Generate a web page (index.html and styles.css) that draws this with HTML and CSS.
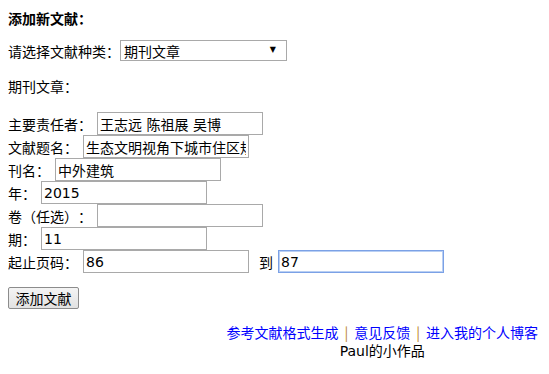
FILE: index.html
```html
<!DOCTYPE html>
<html lang="zh-CN">
<head>
    <meta charset="UTF-8">
    <title>参考文献格式生成</title>
    <link rel="stylesheet" href="styles.css">
</head>
<body>

<div class="title">添加新文献：</div>

<div class="select-row">
    <label for="docType">请选择文献种类：</label>
    <div class="select-wrap">
        <select id="docType" class="doc-select">
            <option>期刊文章</option>
            <option>专著</option>
            <option>学位论文</option>
        </select>
        <span class="select-arrow">&#9660;</span>
    </div>
</div>

<div class="subtitle">期刊文章：</div>

<div class="fields">
    <div class="field"><label>主要责任者：</label><input type="text" value="王志远 陈祖展 吴博"></div>
    <div class="field"><label>文献题名：</label><input type="text" value="生态文明视角下城市住区规划研究"></div>
    <div class="field"><label>刊名：</label><input type="text" value="中外建筑"></div>
    <div class="field"><label>年：</label><input type="text" value="2015"></div>
    <div class="field"><label>卷（任选）：</label><input type="text" value=""></div>
    <div class="field"><label>期：</label><input type="text" value="11"></div>
    <div class="field">
        <label>起止页码：</label><input type="text" value="86">
        <span class="to">到</span><input type="text" class="active" value="87" autofocus>
    </div>
</div>

<button class="add-btn">添加文献</button>

<div class="footer">
    <div class="footer-inner">
        <div class="links"><a href="#">参考文献格式生成</a><span class="sep">|</span><a href="#">意见反馈</a><span class="sep">|</span><a href="#">进入我的个人博客</a></div>
        <div class="credit"><span class="latin">Paul</span>的小作品</div>
    </div>
</div>

</body>
</html>
```

FILE: styles.css
```css
/* Page base */
body {
    margin: 8px;
    font-family: "Noto Sans CJK SC", "DejaVu Sans", sans-serif;
    font-size: 14px;
    color: #000;
    background: #fff;
    text-spacing-trim: space-all;
}

.latin {
    font-family: "DejaVu Sans", sans-serif;
}

.title {
    font-weight: bold;
    height: 20px;
    line-height: 20px;
}

.select-row {
    display: flex;
    align-items: center;
    margin-top: 12px;
    height: 21px;
}

.select-wrap {
    position: relative;
}

.doc-select {
    appearance: none;
    -webkit-appearance: none;
    width: 167px;
    height: 21px;
    margin: 0;
    padding: 0 0 0 3px;
    border: 1px solid #a9a9a9;
    border-radius: 0;
    background: #fff;
    font-family: inherit;
    font-size: 14px;
    color: #000;
    box-sizing: border-box;
}

.select-arrow {
    position: absolute;
    right: 11px;
    top: 5px;
    font-family: "DejaVu Sans", sans-serif;
    font-size: 8px;
    line-height: 10px;
    pointer-events: none;
}

.subtitle {
    margin-top: 15px;
    height: 20px;
    line-height: 20px;
}

.fields {
    margin-top: 16px;
}

.field {
    display: flex;
    align-items: center;
    height: 23px;
}

.field input {
    width: 166px;
    height: 23px;
    margin: 0 0 0 5px;
    padding: 0 2px;
    border: 1px solid #a9a9a9;
    box-sizing: border-box;
    font-family: "DejaVu Sans", "Noto Sans CJK SC", sans-serif;
    font-size: 14px;
    color: #000;
    outline: none;
}

.field .to {
    margin-left: 10px;
}

.field input.active {
    border: 1px solid #7ba1e6;
    box-shadow: inset 0 0 0 1px #b9cff3;
}

.add-btn {
    display: block;
    margin-top: 14px;
    height: 22px;
    width: 71px;
    padding: 0;
    border: 1px solid #8c8c8c;
    border-radius: 2px;
    background: linear-gradient(#f4f4f4, #e2e2e2);
    font-family: inherit;
    font-size: 14px;
    color: #000;
}

.footer {
    display: flex;
    justify-content: flex-end;
    margin-top: 14px;
    margin-right: 3px;
}

.footer-inner {
    text-align: center;
}

.links,
.credit {
    height: 18px;
    line-height: 18px;
    white-space: nowrap;
}

.footer a {
    color: #0000ff;
    text-decoration: none;
}

.sep {
    color: #b8801e;
    margin: 0 6px;
}
```
